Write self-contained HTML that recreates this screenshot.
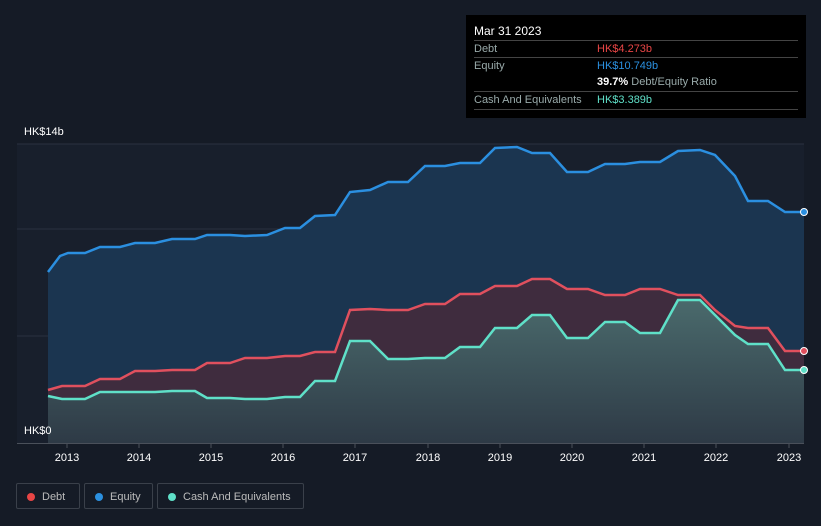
<!DOCTYPE html>
<html><head><meta charset="utf-8"><style>
body{margin:0;width:821px;height:526px;background:#151b26;font-family:"Liberation Sans",sans-serif;overflow:hidden;position:relative}
.tt{position:absolute;left:466px;top:15px;width:340px;height:103px;background:#000;color:#fff;font-size:11px}
.tt .r{position:absolute;left:8px;width:324px;border-top:1px solid #444;height:17px;line-height:17px}
.g{color:#9aa}
.leg{position:absolute;top:483px;height:26px;border:1px solid #3a404a;border-radius:2px;color:#bbb;font-size:11px;line-height:26px;box-sizing:border-box}
.leg i{display:inline-block;width:8px;height:8px;border-radius:50%;margin:0 7px 0 10px;vertical-align:-1px}
.ax{position:absolute;color:#fff;font-size:11px}
</style></head><body>
<svg width="821" height="526" style="position:absolute;left:0;top:0">
<defs><linearGradient id="c" x1="0" y1="0" x2="0" y2="1"><stop offset="0" stop-color="#4a6a6c"/><stop offset="1" stop-color="#2e3a46"/></linearGradient></defs>
<rect x="17" y="144" width="787" height="299" fill="#181f2c"/>
<line x1="17" y1="144" x2="804" y2="144" stroke="#2a3140"/>
<line x1="17" y1="229" x2="804" y2="229" stroke="#2a3140"/>
<line x1="17" y1="336" x2="804" y2="336" stroke="#2a3140"/>
<polygon fill="#1b3550" points="48,443 48,272 60,256 68,253 85,253 100,247 120,247 135,243 155,243 172,239 195,239 207,235 230,235 245,236 267,235 285,228 300,228 315,216 335,215 350,192 370,190 388,182 408,182 425,166 445,166 460,163 480,163 495,148 517,147 532,153 550,153 567,172 588,172 605,164 625,164 640,162 660,162 678,151 700,150 715,155 735,176 748,201 768,201 785,212 804,212 804,443"/>
<polygon fill="#3f2c3e" points="48,443 48,390 62,386 85,386 100,379 120,379 135,371 155,371 172,370 195,370 207,363 230,363 245,358 267,358 285,356 300,356 315,352 335,352 350,310 370,309 388,310 408,310 425,304 445,304 460,294 480,294 495,286 517,286 532,279 550,279 567,289 588,289 605,295 625,295 640,289 660,289 678,295 700,295 715,310 735,326 748,328 768,328 785,351 804,351 804,443"/>
<polygon fill="url(#c)" points="48,443 48,396 62,399 85,399 100,392 120,392 155,392 172,391 195,391 207,398 230,398 245,399 267,399 285,397 300,397 315,381 335,381 350,341 370,341 388,359 408,359 425,358 445,358 460,347 480,347 495,328 517,328 532,315 550,315 567,338 588,338 605,322 625,322 640,333 660,333 678,300 700,300 715,315 735,335 748,344 768,344 785,370 804,370 804,443"/>
<polyline fill="none" stroke="#2b8fe0" stroke-width="2.5" points="48,272 60,256 68,253 85,253 100,247 120,247 135,243 155,243 172,239 195,239 207,235 230,235 245,236 267,235 285,228 300,228 315,216 335,215 350,192 370,190 388,182 408,182 425,166 445,166 460,163 480,163 495,148 517,147 532,153 550,153 567,172 588,172 605,164 625,164 640,162 660,162 678,151 700,150 715,155 735,176 748,201 768,201 785,212 804,212"/>
<polyline fill="none" stroke="#e0505e" stroke-width="2.5" points="48,390 62,386 85,386 100,379 120,379 135,371 155,371 172,370 195,370 207,363 230,363 245,358 267,358 285,356 300,356 315,352 335,352 350,310 370,309 388,310 408,310 425,304 445,304 460,294 480,294 495,286 517,286 532,279 550,279 567,289 588,289 605,295 625,295 640,289 660,289 678,295 700,295 715,310 735,326 748,328 768,328 785,351 804,351"/>
<polyline fill="none" stroke="#5fe0c8" stroke-width="2.5" points="48,396 62,399 85,399 100,392 120,392 155,392 172,391 195,391 207,398 230,398 245,399 267,399 285,397 300,397 315,381 335,381 350,341 370,341 388,359 408,359 425,358 445,358 460,347 480,347 495,328 517,328 532,315 550,315 567,338 588,338 605,322 625,322 640,333 660,333 678,300 700,300 715,315 735,335 748,344 768,344 785,370 804,370"/>
<circle cx="804" cy="212" r="3.5" fill="#2b8fe0" stroke="#fff"/>
<circle cx="804" cy="351" r="3.5" fill="#e0505e" stroke="#fff"/>
<circle cx="804" cy="370" r="3.5" fill="#5fe0c8" stroke="#fff"/>
<line x1="17" y1="443.5" x2="804" y2="443.5" stroke="#4a505a"/>
<g stroke="#4a505a"><line x1="67" y1="443" x2="67" y2="448"/><line x1="139" y1="443" x2="139" y2="448"/><line x1="211" y1="443" x2="211" y2="448"/><line x1="283" y1="443" x2="283" y2="448"/><line x1="355" y1="443" x2="355" y2="448"/><line x1="428" y1="443" x2="428" y2="448"/><line x1="500" y1="443" x2="500" y2="448"/><line x1="572" y1="443" x2="572" y2="448"/><line x1="644" y1="443" x2="644" y2="448"/><line x1="716" y1="443" x2="716" y2="448"/><line x1="789" y1="443" x2="789" y2="448"/></g>
<g fill="#fff" font-size="11" text-anchor="middle" font-family="Liberation Sans"><text x="67" y="461">2013</text><text x="139" y="461">2014</text><text x="211" y="461">2015</text><text x="283" y="461">2016</text><text x="355" y="461">2017</text><text x="428" y="461">2018</text><text x="500" y="461">2019</text><text x="572" y="461">2020</text><text x="644" y="461">2021</text><text x="716" y="461">2022</text><text x="789" y="461">2023</text></g>
</svg>
<div class="ax" style="left:24px;top:126px">HK$14b</div>
<div class="ax" style="left:24px;top:425px">HK$0</div>
<div class="tt">
<div style="position:absolute;left:8px;top:9px;font-size:12px">Mar 31 2023</div>
<div class="r" style="top:25px"><span class="g">Debt</span><span style="position:absolute;left:123px;color:#e84545">HK$4.273b</span></div>
<div class="r" style="top:42px"><span class="g">Equity</span><span style="position:absolute;left:123px;color:#2b90e0">HK$10.749b</span></div>
<div class="r" style="top:59px;border:0"><span style="position:absolute;left:123px"><b>39.7%</b> <span class="g">Debt/Equity Ratio</span></span></div>
<div class="r" style="top:76px"><span class="g">Cash And Equivalents</span><span style="position:absolute;left:123px;color:#5fe0c8">HK$3.389b</span></div>
<div class="r" style="top:94px;height:0"></div>
</div>
<div class="leg" style="left:16px;width:64px"><i style="background:#e84545"></i>Debt</div>
<div class="leg" style="left:84px;width:69px"><i style="background:#2b90e0"></i>Equity</div>
<div class="leg" style="left:157px;width:147px"><i style="background:#5fe0c8"></i>Cash And Equivalents</div>
</body></html>
